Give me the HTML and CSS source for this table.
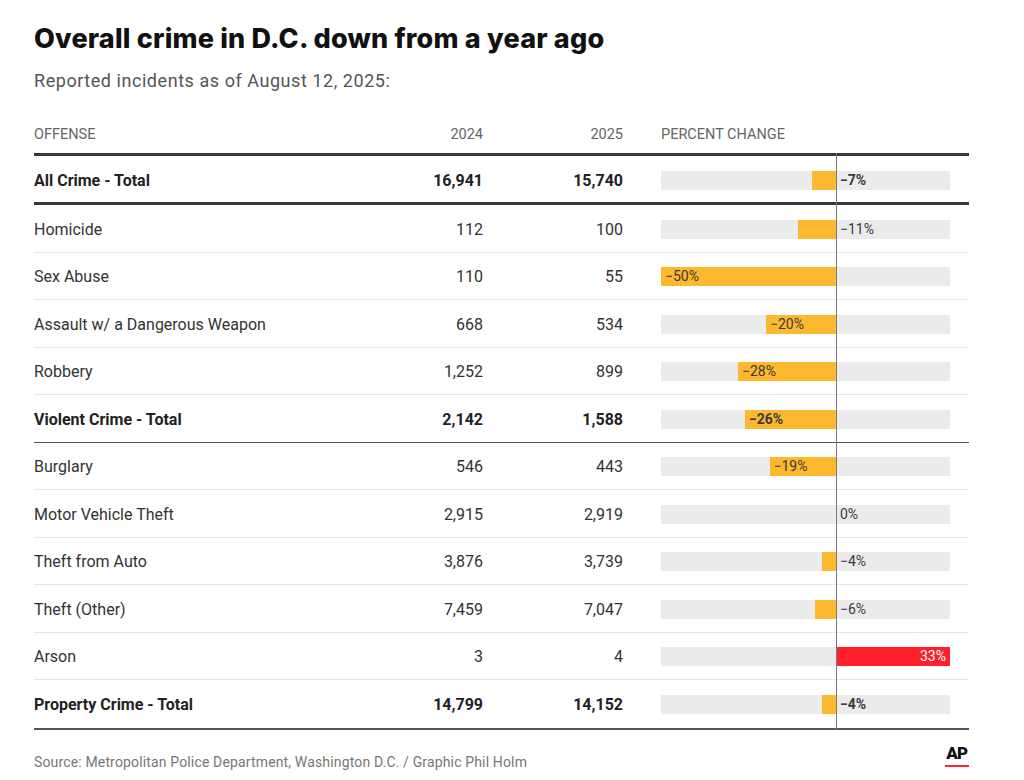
FILE: index.html
```html
<!DOCTYPE html>
<html lang="en">
<head>
<meta charset="utf-8">
<title>Overall crime in D.C. down from a year ago</title>
<link rel="stylesheet" href="styles.css">
</head>
<body>
<div class="graphic">
  <h1 class="title">Overall crime in D.C. down from a year ago</h1>
  <p class="subtitle">Reported incidents as of August 12, 2025:</p>

  <div class="row head">
    <div class="c name">Offense</div>
    <div class="c num">2024</div>
    <div class="c num">2025</div>
    <div class="c chart">Percent change</div>
  </div>

  <div class="body">
    <div class="axis"></div>

    <div class="row total first">
      <div class="c name">All Crime - Total</div>
      <div class="c num">16,941</div>
      <div class="c num">15,740</div>
      <div class="c chart"><div class="track">
        <div class="neg"><div class="bar" style="width:14%"></div></div>
        <div class="pos"><span class="out">−7%</span></div>
      </div></div>
    </div>

    <div class="row">
      <div class="c name">Homicide</div>
      <div class="c num">112</div>
      <div class="c num">100</div>
      <div class="c chart"><div class="track">
        <div class="neg"><div class="bar" style="width:22%"></div></div>
        <div class="pos"><span class="out">−11%</span></div>
      </div></div>
    </div>

    <div class="row">
      <div class="c name">Sex Abuse</div>
      <div class="c num">110</div>
      <div class="c num">55</div>
      <div class="c chart"><div class="track">
        <div class="neg"><div class="bar" style="width:100%"><span class="in">−50%</span></div></div>
        <div class="pos"></div>
      </div></div>
    </div>

    <div class="row">
      <div class="c name">Assault w/ a Dangerous Weapon</div>
      <div class="c num">668</div>
      <div class="c num">534</div>
      <div class="c chart"><div class="track">
        <div class="neg"><div class="bar" style="width:40%"><span class="in">−20%</span></div></div>
        <div class="pos"></div>
      </div></div>
    </div>

    <div class="row">
      <div class="c name">Robbery</div>
      <div class="c num">1,252</div>
      <div class="c num">899</div>
      <div class="c chart"><div class="track">
        <div class="neg"><div class="bar" style="width:56%"><span class="in">−28%</span></div></div>
        <div class="pos"></div>
      </div></div>
    </div>

    <div class="row total sub">
      <div class="c name">Violent Crime - Total</div>
      <div class="c num">2,142</div>
      <div class="c num">1,588</div>
      <div class="c chart"><div class="track">
        <div class="neg"><div class="bar" style="width:52%"><span class="in">−26%</span></div></div>
        <div class="pos"></div>
      </div></div>
    </div>

    <div class="row">
      <div class="c name">Burglary</div>
      <div class="c num">546</div>
      <div class="c num">443</div>
      <div class="c chart"><div class="track">
        <div class="neg"><div class="bar" style="width:38%"><span class="in">−19%</span></div></div>
        <div class="pos"></div>
      </div></div>
    </div>

    <div class="row">
      <div class="c name">Motor Vehicle Theft</div>
      <div class="c num">2,915</div>
      <div class="c num">2,919</div>
      <div class="c chart"><div class="track">
        <div class="neg"></div>
        <div class="pos"><span class="out">0%</span></div>
      </div></div>
    </div>

    <div class="row">
      <div class="c name">Theft from Auto</div>
      <div class="c num">3,876</div>
      <div class="c num">3,739</div>
      <div class="c chart"><div class="track">
        <div class="neg"><div class="bar" style="width:8%"></div></div>
        <div class="pos"><span class="out">−4%</span></div>
      </div></div>
    </div>

    <div class="row">
      <div class="c name">Theft (Other)</div>
      <div class="c num">7,459</div>
      <div class="c num">7,047</div>
      <div class="c chart"><div class="track">
        <div class="neg"><div class="bar" style="width:12%"></div></div>
        <div class="pos"><span class="out">−6%</span></div>
      </div></div>
    </div>

    <div class="row">
      <div class="c name">Arson</div>
      <div class="c num">3</div>
      <div class="c num">4</div>
      <div class="c chart"><div class="track">
        <div class="neg"></div>
        <div class="pos"><div class="bar up" style="width:100%"><span class="in">33%</span></div></div>
      </div></div>
    </div>

    <div class="row total last">
      <div class="c name">Property Crime - Total</div>
      <div class="c num">14,799</div>
      <div class="c num">14,152</div>
      <div class="c chart"><div class="track">
        <div class="neg"><div class="bar" style="width:8%"></div></div>
        <div class="pos"><span class="out">−4%</span></div>
      </div></div>
    </div>
  </div>

  <div class="footer">
    <p class="source">Source: Metropolitan Police Department, Washington D.C. / Graphic Phil Holm</p>
    <div class="ap">AP</div>
  </div>
</div>
</body>
</html>
```

FILE: styles.css
```css
* { box-sizing: border-box; }

html, body {
  margin: 0;
  padding: 0;
  background: #ffffff;
}

body {
  font-family: Roboto, "Liberation Sans", Arial, sans-serif;
  color: #333333;
}

.graphic {
  width: 935px;
  margin-left: 34px;
  padding-top: 24px;
}

.title {
  margin: 0;
  font-family: Inter, Roboto, "Liberation Sans", Arial, sans-serif;
  font-size: 27px;
  line-height: 30px;
  font-weight: 800;
  color: #111111;
  letter-spacing: 0.2px;
}

.subtitle {
  margin: 16px 0 0;
  font-size: 18px;
  line-height: 22px;
  letter-spacing: 0.55px;
  color: #555555;
}

.row {
  display: grid;
  grid-template-columns: 349px 100px 140px 346px;
  align-items: center;
  height: 47.5px;
  padding-top: 2px;
  border-bottom: 1px solid #e6e6e6;
  font-size: 16px;
  color: #333333;
}

.c.num { text-align: right; }

.c.chart {
  padding: 0 19px 0 38px;
}

.row.head {
  height: auto;
  align-items: end;
  padding: 34px 0 9px;
  border-bottom: none;
  font-size: 14.5px;
  line-height: 18px;
  text-transform: uppercase;
  color: #666666;
}

.body {
  position: relative;
  border-top: 3px solid #383838;
}

.axis {
  position: absolute;
  top: -3px;
  bottom: 0;
  left: 802px;
  width: 1px;
  background: #7a7a7a;
  z-index: 2;
}

.row.total { font-weight: 700; color: #222222; }

.row.first {
  height: 49px;
  border-bottom: 3px solid #383838;
}

.row.sub { border-bottom: 1px solid #555555; }

.row.last { border-bottom: 2px solid #555555; height: 49.5px; }

.track {
  display: flex;
  height: 19px;
  background: #ebebeb;
  font-size: 14px;
}

.neg {
  width: 175px;
  display: flex;
  justify-content: flex-end;
}

.pos {
  flex: 1;
  display: flex;
  align-items: center;
  min-width: 0;
}

.bar {
  height: 19px;
  background: #fcb82e;
  display: flex;
  align-items: center;
  padding-left: 4px;
  white-space: nowrap;
  overflow: hidden;
}

.bar.up {
  background: #ff1f2d;
  justify-content: flex-end;
  padding: 0 4px 0 0;
}

.in, .out {
  line-height: 19px;
  color: #3a3a3a;
}

.out { padding-left: 4px; }

.bar.up .in { color: #ffffff; }

.footer {
  display: flex;
  justify-content: space-between;
  align-items: flex-end;
  margin-top: 15px;
}

.source {
  margin: 0;
  font-size: 14px;
  line-height: 18px;
  letter-spacing: 0.15px;
  color: #777777;
}

.ap {
  font-size: 17px;
  line-height: 17px;
  font-weight: 900;
  color: #111111;
  letter-spacing: -1px;
  padding: 0 2px 3px 1px;
  border-bottom: 2px solid #ff1f2d;
  margin-bottom: 4px;
}
```
